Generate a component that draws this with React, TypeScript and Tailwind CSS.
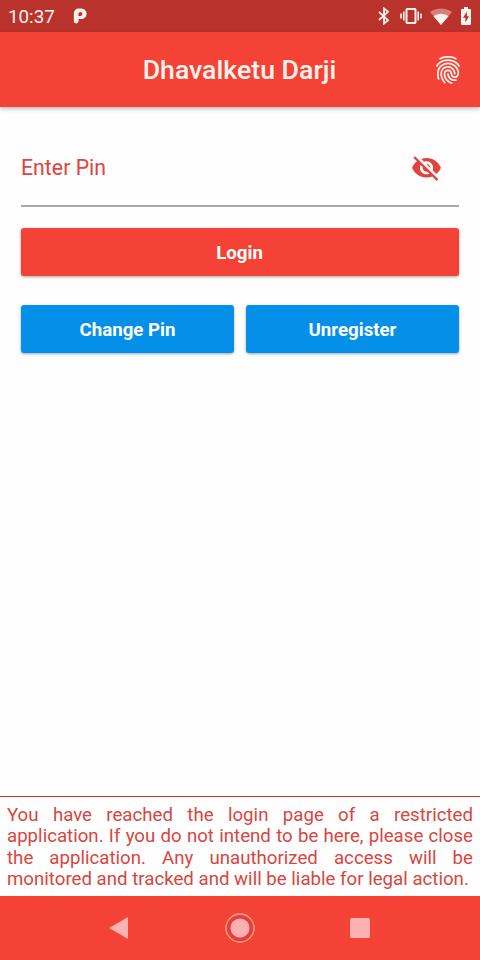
import React from 'react';
import { IoMdEyeOff, IoMdFingerPrint } from 'react-icons/io';

const StatusBar = () => {
    return (
        <div className="flex h-8 items-center bg-[#b9332c] pl-2 pr-[9px] text-[#fff3ec]">
            <p className="pt-0.5 text-[18.8px]">10:37</p>
            <svg className="ml-[18px]" width="14" height="16" viewBox="0 0 14 16">
                <path fillRule="evenodd" fill="currentColor" d="M5.5.5h2.8a5.2 5.2 0 0 1 0 10.6H5.6V13a2.4 2.4 0 0 1-4.8 0V5.2A4.7 4.7 0 0 1 5.5.5ZM5.4 7.9h2.2a2 2 0 1 0-2.2-2Z" />
            </svg>
            <div className="ml-auto flex items-center">
                {/* bluetooth */}
                <svg width="12" height="18" viewBox="0 0 12 18" fill="none" stroke="currentColor" strokeWidth="1.8">
                    <path d="m1 5 9 8.2L6 16.6V1.4l4 3.4L1 13" />
                </svg>
                {/* vibration */}
                <svg className="ml-[10px]" width="22" height="18" viewBox="0 0 22 18" fill="none" stroke="currentColor">
                    <rect x="6.5" y="2" width="9" height="14" rx="0.8" strokeWidth="2" />
                    <path d="M1 6.5v5M21 6.5v5M3.8 4.5v9M18.2 4.5v9" strokeWidth="1.6" />
                </svg>
                {/* wifi */}
                <svg className="ml-2" width="22" height="17" viewBox="0 0 22 17">
                    <path fill="currentColor" opacity="0.4" d="M0 4C6-.8 16-.8 22 4L11 17Z" />
                    <path fill="currentColor" d="M3.5 8.2c4-3.4 11-3.4 15 0L11 17Z" />
                </svg>
                {/* battery */}
                <svg className="ml-[9px]" width="10" height="18" viewBox="0 0 10 18">
                    <path fillRule="evenodd" fill="currentColor" d="M3 0h4v2h2a1 1 0 0 1 1 1v14a1 1 0 0 1-1 1H1a1 1 0 0 1-1-1V3a1 1 0 0 1 1-1h2ZM5.9 4.5 2 10.8h2.4v4.7L8 9.2H5.9Z" />
                </svg>
            </div>
        </div>
    );
};

const Header = () => {
    return (
        <div className="relative z-10 grid h-[75px] grid-cols-[1fr_auto_1fr] items-center bg-[#f44336] px-4 text-[#fff3ec] shadow-[0_2px_4px_rgba(0,0,0,0.25)]">
            <span />
            <p className="pt-[2px] pr-px text-[26.7px] font-medium">Dhavalketu Darji</p>
            <IoMdFingerPrint size={32} className="justify-self-end" />
        </div>
    );
};

const LoginForm = () => {
    return (
        <div className="px-[21px] pt-[22px]">
            <div className="flex h-[78px] items-center justify-between border-b-2 border-[#a9a9a9] pr-4 pt-0.5 text-[#e0443c]">
                <p className="text-[21.3px]">Enter Pin</p>
                <IoMdEyeOff size={33} />
            </div>
            <button className="mt-[21px] block h-12 w-full rounded-[3px] bg-[#f44336] pt-[3px] pr-px text-[18.66px] font-bold text-white shadow-[0_1px_3px_rgba(0,0,0,0.35)]">Login</button>
            <div className="mt-[29px] grid grid-cols-2 gap-3 text-[18.66px] font-bold text-white">
                <button className="h-12 rounded-[3px] bg-[#0490e8] pt-[3px] shadow-[0_1px_3px_rgba(0,0,0,0.35)]">Change Pin</button>
                <button className="h-12 rounded-[3px] bg-[#0490e8] pt-[3px] shadow-[0_1px_3px_rgba(0,0,0,0.35)]">Unregister</button>
            </div>
        </div>
    );
};

const NavBar = () => {
    return (
        <div className="flex h-16 items-center justify-between bg-[#f44336] px-[104px]">
            <svg width="32" height="32" viewBox="0 0 32 32">
                <path d="M5 16 24 5v22Z" fill="#fdb2b2" />
            </svg>
            <svg width="32" height="32" viewBox="0 0 32 32">
                <circle cx="16" cy="16" r="14" fill="#e5403d" stroke="#ffa58f" strokeWidth="1.3" />
                <circle cx="16" cy="16" r="9.5" fill="#fdb2b2" />
            </svg>
            <svg width="32" height="32" viewBox="0 0 32 32">
                <rect x="6" y="6" width="20" height="20" rx="1.5" fill="#fdb2b2" />
            </svg>
        </div>
    );
};

const App = () => {
    return (
        <div className="flex h-[960px] w-[480px] flex-col bg-[#fefefe] font-[Roboto,sans-serif]">
            <StatusBar />
            <Header />
            <LoginForm />
            <p className="mt-auto h-[100px] border-t border-[#d3322b] px-[7px] pt-2 text-justify text-[18.66px] leading-[21.3px] text-[#d8463f]">
                You have reached the login page of a restricted application. If you do not intend to be here, please close the application. Any unauthorized access will be monitored and tracked and will be liable for legal action.
            </p>
            <NavBar />
        </div>
    );
};

export default App;
